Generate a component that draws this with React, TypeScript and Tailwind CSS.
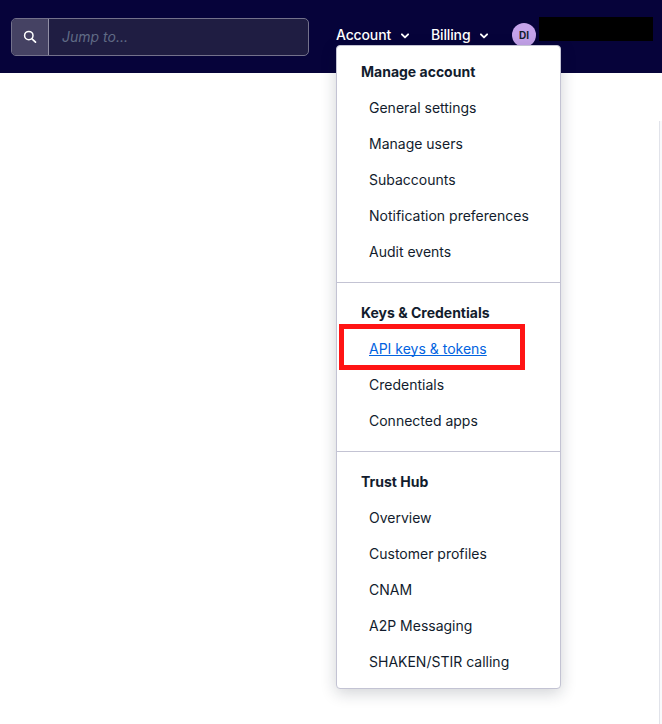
import React from "react";

type Section = { title: string; items: string[] };

const sections: Section[] = [
  {
    title: "Manage account",
    items: ["General settings", "Manage users", "Subaccounts", "Notification preferences", "Audit events"],
  },
  { title: "Keys & Credentials", items: ["API keys & tokens", "Credentials", "Connected apps"] },
  {
    title: "Trust Hub",
    items: ["Overview", "Customer profiles", "CNAM", "A2P Messaging", "SHAKEN/STIR calling"],
  },
];

function Chevron() {
  return (
    <svg width="10" height="8" viewBox="0 0 10 8" fill="none" className="mt-px">
      <path d="M1.9 2.3 5 5.4l3.1-3.1" stroke="#fff" strokeWidth="1.9" strokeLinecap="round" strokeLinejoin="round" />
    </svg>
  );
}

function SearchBox() {
  return (
    <div className="flex h-[38px] w-[298px] overflow-hidden rounded-[5px] border border-[#73718b] bg-[#1f1d42]">
      <div className="flex w-[37px] shrink-0 items-center justify-center border-r border-[#918fa5] bg-[#454263]">
        <svg width="14" height="14" viewBox="0 0 14 14" fill="none" stroke="#fff" strokeLinecap="round">
          <circle cx="5.8" cy="5.6" r="4.2" strokeWidth="1.5" />
          <path d="m9 8.8 3.5 3.3" strokeWidth="1.7" />
        </svg>
      </div>
      <span className="flex items-center pl-[13px] text-[14px] font-normal italic text-[#606b85]">Jump to...</span>
    </div>
  );
}

function MenuItem({ label }: { label: string }) {
  const active = label === "API keys & tokens";
  return (
    <li className="relative flex h-9 items-center pl-8">
      <a className={active ? "text-[#0263e0] underline decoration-1 underline-offset-1 [text-decoration-skip-ink:none]" : ""}>
        {label}
      </a>
      {active && <span className="absolute -top-[7px] left-[2px] h-[46px] w-[186px] border-5 border-[#ff1414]" />}
    </li>
  );
}

function AccountMenu() {
  return (
    <nav className="absolute left-[336px] top-[45px] w-[225px] rounded-[4px] border border-[#c3c3d3] bg-white py-2 text-[14px] leading-5 text-[#121c2d] shadow-[0_4px_16px_rgba(18,28,45,0.2)]">
      {sections.map((s, i) => (
        <section key={s.title} className={i > 0 ? "mt-3 border-t border-[#c3c3d3] pt-3" : ""}>
          <h2 className="flex h-9 items-center pl-6 font-bold">{s.title}</h2>
          <ul>
            {s.items.map((item) => (
              <MenuItem key={item} label={item} />
            ))}
          </ul>
        </section>
      ))}
    </nav>
  );
}

export default function App() {
  return (
    <div className="relative flex h-[724px] w-[662px] flex-col overflow-hidden bg-white font-['Inter','Liberation_Sans',sans-serif]">
      <header className="flex h-[73px] shrink-0 items-start bg-[#06033a] pl-[11px] text-[14px] font-medium leading-5 text-white">
        <div className="mt-[18px]">
          <SearchBox />
        </div>
        <div className="ml-[27px] mt-[25px] flex w-[95px] items-center">
          <span className="w-[64px] tracking-[-0.01em]">Account</span>
          <Chevron />
        </div>
        <div className="mt-[25px] flex w-[81px] items-center">
          <span className="w-[48px] tracking-[-0.01em]">Billing</span>
          <Chevron />
        </div>
        <span className="mt-[23px] flex size-6 items-center justify-center rounded-full bg-[#c5a3ea] text-[10px] font-bold text-[#121c2d]">
          DI
        </span>
        <span className="ml-[3px] mt-[17px] h-6 w-[114px] bg-black" />
      </header>
      <main className="flex flex-1 justify-end pt-12">
        <div className="w-[3px] border-l border-[#e1e3ea] bg-[#f9f9fb]" />
      </main>
      <AccountMenu />
    </div>
  );
}
